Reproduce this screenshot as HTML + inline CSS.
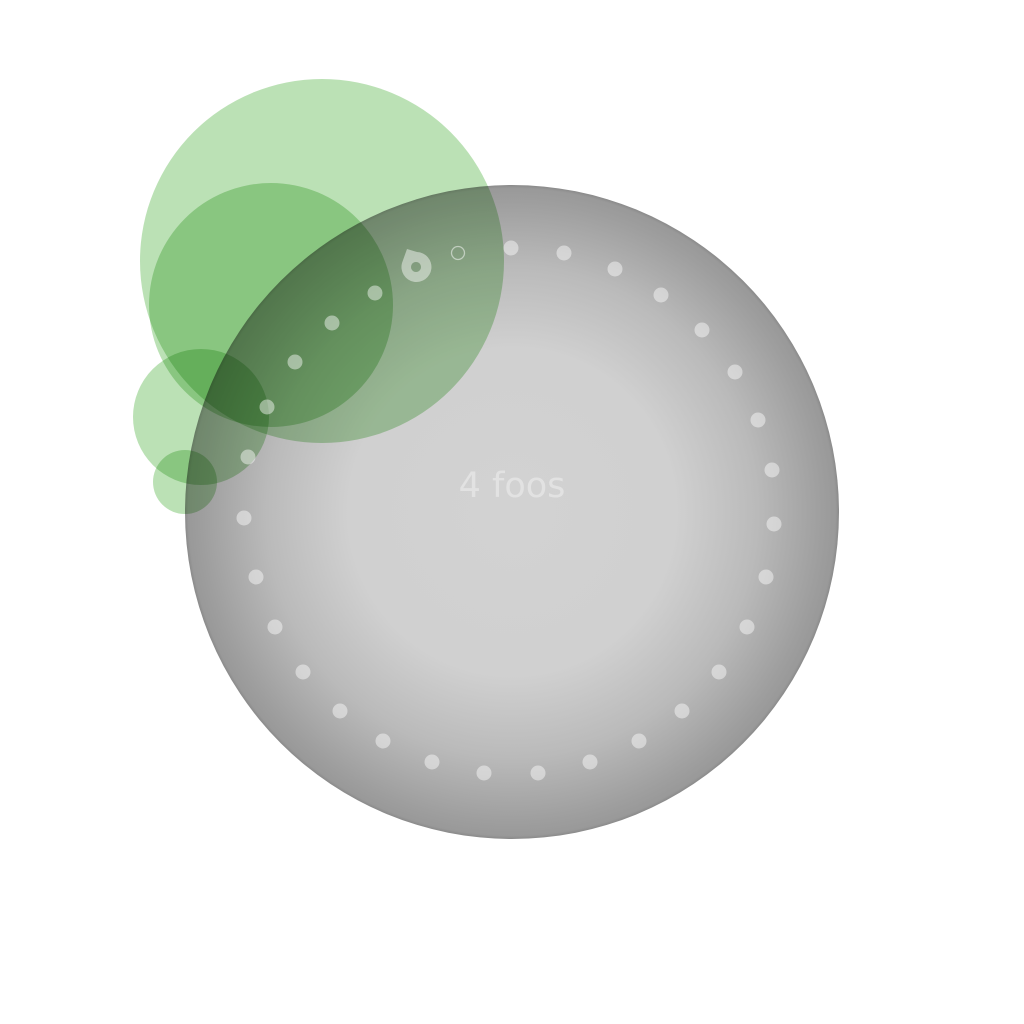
<!DOCTYPE html>
<html><head><style>html,body{margin:0;background:#fff;width:1024px;height:1024px;overflow:hidden}</style></head>
<body>
<svg width="1024" height="1024" viewBox="0 0 1024 1024" xmlns="http://www.w3.org/2000/svg">
<defs>
<radialGradient id="g" cx="512" cy="512" r="327" gradientUnits="userSpaceOnUse">
<stop offset="0" stop-color="#d2d2d2"/>
<stop offset="0.5" stop-color="#d0d0d0"/>
<stop offset="0.75" stop-color="#bababa"/>
<stop offset="0.95" stop-color="#9e9e9e"/>
<stop offset="0.99" stop-color="#999"/>
<stop offset="1" stop-color="#8a8a8a"/>
</radialGradient>
</defs>
<circle cx="512" cy="512" r="327" fill="url(#g)"/>
<g style="mix-blend-mode:multiply">
<circle cx="322" cy="261" r="182" fill="#bbe1b5" style="mix-blend-mode:multiply"/>
<circle cx="271" cy="305" r="122" fill="#bbe1b5" style="mix-blend-mode:multiply"/>
<circle cx="201" cy="417" r="68" fill="#bbe1b5" style="mix-blend-mode:multiply"/>
<circle cx="185" cy="482" r="32" fill="#bbe1b5" style="mix-blend-mode:multiply"/>
</g>
<g fill="rgba(255,255,255,0.45)">
<circle cx="511" cy="248" r="7.5"/><circle cx="564" cy="253" r="7.5"/><circle cx="615" cy="269" r="7.5"/>
<circle cx="661" cy="295" r="7.5"/><circle cx="702" cy="330" r="7.5"/><circle cx="735" cy="372" r="7.5"/>
<circle cx="758" cy="420" r="7.5"/><circle cx="772" cy="470" r="7.5"/><circle cx="774" cy="524" r="7.5"/>
<circle cx="766" cy="577" r="7.5"/><circle cx="747" cy="627" r="7.5"/><circle cx="719" cy="672" r="7.5"/>
<circle cx="682" cy="711" r="7.5"/><circle cx="639" cy="741" r="7.5"/><circle cx="590" cy="762" r="7.5"/>
<circle cx="538" cy="773" r="7.5"/><circle cx="484" cy="773" r="7.5"/><circle cx="432" cy="762" r="7.5"/>
<circle cx="383" cy="741" r="7.5"/><circle cx="340" cy="711" r="7.5"/><circle cx="303" cy="672" r="7.5"/>
<circle cx="275" cy="627" r="7.5"/><circle cx="256" cy="577" r="7.5"/><circle cx="244" cy="518" r="7.5"/>
<circle cx="248" cy="457" r="7.5"/><circle cx="267" cy="407" r="7.5"/><circle cx="295" cy="362" r="7.5"/>
<circle cx="332" cy="323" r="7.5"/><circle cx="375" cy="293" r="7.5"/>
</g>
<circle cx="458" cy="253" r="6.5" fill="none" stroke="rgba(255,255,255,0.5)" stroke-width="1.3"/>
<path fill-rule="evenodd" fill="rgba(255,255,255,0.45)" d="M407 249 L417 252 A15 15 0 1 1 402 263 Z M416 262 A5 5 0 1 0 416.01 262 Z"/>
<text x="512" y="497" text-anchor="middle" font-family="DejaVu Sans, Liberation Sans, sans-serif" font-size="35" fill="#e2e2e2">4 foos</text>
</svg>
</body></html>
